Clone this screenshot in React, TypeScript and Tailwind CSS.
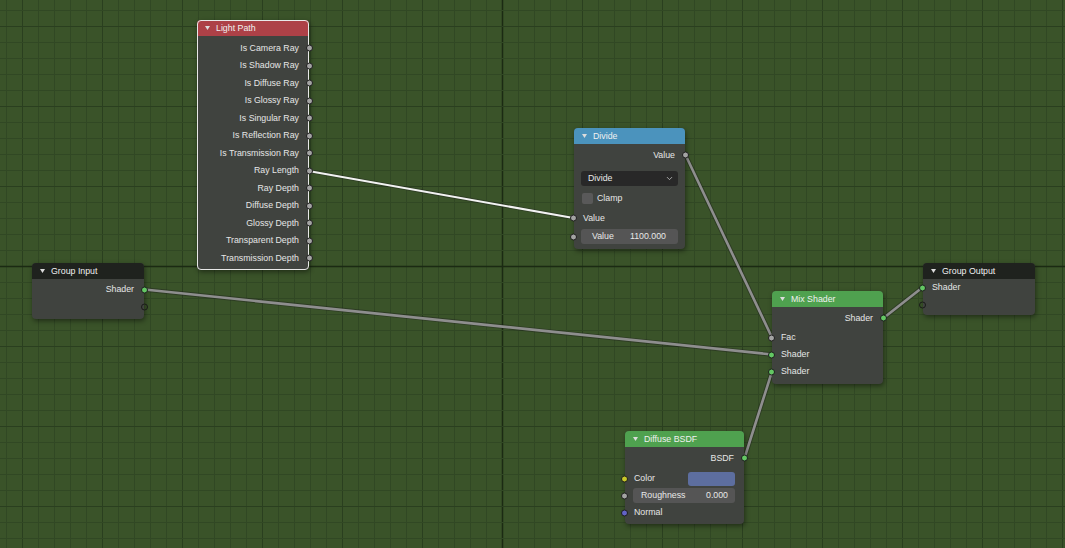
import { ChevronDown } from 'lucide-react';
import type { ReactNode } from 'react';

type SockColor = 'grey' | 'green' | 'yellow' | 'blue' | 'empty';

// socket fill per data type, as in the node editor theme
const SOCKET: Record<SockColor, string> = {
    grey: 'bg-[#a3a3a3] border-[#1d1d1d]',
    green: 'bg-[#63c763] border-[#1d1d1d]',
    yellow: 'bg-[#c7c729] border-[#1d1d1d]',
    blue: 'bg-[#6363c7] border-[#1d1d1d]',
    empty: 'bg-transparent border-[#1a1a1a]',
};

function Socket({ color, side }: { color: SockColor; side: 'in' | 'out' }) {
    return (
        <span
            className={`absolute top-1/2 -translate-y-1/2 w-[7px] h-[7px] rounded-full border ${SOCKET[color]} ${side === 'in' ? 'left-[-4px]' : 'right-[-4px]'}`}
        />
    );
}

function Tri() {
    return (
        <svg width="5" height="4" viewBox="0 0 5 4" className="shrink-0">
            <path d="M0 0 L5 0 L2.5 4 Z" fill="#dcdcdc" />
        </svg>
    );
}

function Header({ title, color }: { title: string; color: string }) {
    return (
        <div className={`flex items-center gap-[6px] h-[16px] pl-[8px] rounded-t-[4px] text-[#f0f0f0] ${color}`}>
            <Tri />
            <span>{title}</span>
        </div>
    );
}

function OutRow({ label, color, h = 'h-[17.5px]' }: { label?: string; color: SockColor; h?: string }) {
    return (
        <div className={`relative flex items-center justify-end pr-[10px] ${h}`}>
            {label}
            <Socket color={color} side="out" />
        </div>
    );
}

function InRow({ label, color, h = 'h-[17px]', children }: { label?: string; color: SockColor; h?: string; children?: ReactNode }) {
    return (
        <div className={`relative flex items-center pl-[9px] ${h}`}>
            <Socket color={color} side="in" />
            {label}
            {children}
        </div>
    );
}

function Node({ pos, header, children, selected }: { pos: string; header: ReactNode; children: ReactNode; selected?: boolean }) {
    return (
        <div
            className={`absolute ${pos} rounded-[4px] bg-[#40433f] text-[#e6e6e6] shadow-[1px_2px_5px_rgba(0,0,0,0.45)] ${selected ? 'outline-1 -outline-offset-1 outline-[#e8e8e8]' : ''}`}
        >
            {header}
            {children}
        </div>
    );
}

function Field({ label, value, cls }: { label: string; value: string; cls: string }) {
    return (
        <div className={`flex items-center justify-between h-[15px] rounded-[3px] bg-[#555555] text-[#e8e8e8] ${cls}`}>
            <span>{label}</span>
            <span>{value}</span>
        </div>
    );
}

const LIGHT_PATH = [
    'Is Camera Ray',
    'Is Shadow Ray',
    'Is Diffuse Ray',
    'Is Glossy Ray',
    'Is Singular Ray',
    'Is Reflection Ray',
    'Is Transmission Ray',
    'Ray Length',
    'Ray Depth',
    'Diffuse Depth',
    'Glossy Depth',
    'Transparent Depth',
    'Transmission Depth',
];

// grid lines every 16px, stronger every 5th, axis through (502, 266)
function Grid() {
    const lines: ReactNode[] = [];
    for (let x = 6; x < 1065; x += 16) {
        const k = Math.round((x - 502) / 16);
        const stroke = k === 0 ? '#1b2a13' : k % 5 === 0 ? '#2a3f1f' : '#314824';
        lines.push(<line key={`v${x}`} x1={x + 0.5} y1={0} x2={x + 0.5} y2={548} stroke={stroke} strokeWidth={k === 0 ? 1.5 : 1} />);
    }
    for (let y = 10; y < 548; y += 16) {
        const k = Math.round((y - 266) / 16);
        const stroke = k === 0 ? '#1b2a13' : k % 5 === 0 ? '#2a3f1f' : '#314824';
        lines.push(<line key={`h${y}`} x1={0} y1={y + 0.5} x2={1065} y2={y + 0.5} stroke={stroke} strokeWidth={k === 0 ? 1.5 : 1} />);
    }
    return <g>{lines}</g>;
}

const WIRES: [number, number, number, number][] = [
    [685.5, 155, 772, 337.5],
    [144.5, 289.5, 772, 354.5],
    [744.5, 458, 772, 371.5],
    [883.5, 318, 923, 287],
];

export default function App() {
    return (
        <div className="relative w-[1065px] h-[548px] overflow-hidden bg-[#3a5329] font-['Liberation_Sans',Arial,sans-serif] text-[8.8px] leading-none">
            <svg className="absolute inset-0" width="1065" height="548">
                <Grid />
                {WIRES.map(([x1, y1, x2, y2], i) => (
                    <g key={i}>
                        <line x1={x1} y1={y1} x2={x2} y2={y2} stroke="#1c1c1c" strokeOpacity="0.4" strokeWidth="4.5" strokeLinecap="round" />
                        <line x1={x1} y1={y1} x2={x2} y2={y2} stroke="#8e8e8e" strokeWidth="2.6" strokeLinecap="round" />
                    </g>
                ))}
                <line x1={308.5} y1={171} x2={573.5} y2={218} stroke="#1c1c1c" strokeOpacity="0.4" strokeWidth="3.8" strokeLinecap="round" />
                <line x1={308.5} y1={171} x2={573.5} y2={218} stroke="#f2f2f2" strokeWidth="2" strokeLinecap="round" />
            </svg>

            {/* Light Path */}
            <Node pos="left-[197px] top-[20px] w-[112px]" selected header={<Header title="Light Path" color="bg-[#ad4147]" />}>
                <div className="pt-[3.5px] pb-[3px]">
                    {LIGHT_PATH.map((l) => (
                        <OutRow key={l} label={l} color="grey" />
                    ))}
                </div>
            </Node>

            {/* Divide */}
            <Node pos="left-[574px] top-[128px] w-[111px]" header={<Header title="Divide" color="bg-[#4b93bd]" />}>
                <div className="pt-[2px] pb-[5px]">
                    <OutRow label="Value" color="grey" h="h-[18px]" />
                    <div className="mt-[7px] mx-[7px] h-[15px] flex items-center justify-between pl-[7px] pr-[4px] rounded-[3px] bg-[#282828] text-[#e8e8e8]">
                        <span>Divide</span>
                        <ChevronDown size={9} strokeWidth={2} className="text-[#cfcfcf]" />
                    </div>
                    <div className="mt-[6px] h-[12px] flex items-center gap-[4px] pl-[8px]">
                        <span className="w-[11px] h-[11px] rounded-[2px] bg-[#595959]" />
                        <span>Clamp</span>
                    </div>
                    <InRow label="Value" color="grey" h="h-[18px] mt-[5px]" />
                    <div className="relative mt-[2px]">
                        <Socket color="grey" side="in" />
                        <Field label="Value" value="1100.000" cls="mx-[7px] pl-[11px] pr-[12px]" />
                    </div>
                </div>
            </Node>

            {/* Group Input */}
            <Node pos="left-[32px] top-[263px] w-[112px]" header={<Header title="Group Input" color="bg-[#1f221e]" />}>
                <div className="pt-[2px] pb-[4px]">
                    <OutRow label="Shader" color="green" h="h-[17px]" />
                    <OutRow color="empty" h="h-[17px]" />
                </div>
            </Node>

            {/* Group Output */}
            <Node pos="left-[923px] top-[263px] w-[112px]" header={<Header title="Group Output" color="bg-[#1f221e]" />}>
                <div className="pb-[2px]">
                    <InRow label="Shader" color="green" />
                    <InRow color="empty" />
                </div>
            </Node>

            {/* Mix Shader */}
            <Node pos="left-[772px] top-[291px] w-[111px]" header={<Header title="Mix Shader" color="bg-[#4fa14f]" />}>
                <div className="pt-[2px] pb-[4px]">
                    <OutRow label="Shader" color="green" h="h-[18px]" />
                    <InRow label="Fac" color="grey" h="h-[17px] mt-[2px]" />
                    <InRow label="Shader" color="green" />
                    <InRow label="Shader" color="green" />
                </div>
            </Node>

            {/* Diffuse BSDF */}
            <Node pos="left-[625px] top-[431px] w-[119px]" header={<Header title="Diffuse BSDF" color="bg-[#4fa14f]" />}>
                <div className="pt-[2px] pb-[3px]">
                    <OutRow label="BSDF" color="green" h="h-[18px]" />
                    <InRow label="Color" color="yellow" h="h-[17px] mt-[3px] justify-between pr-[9px]">
                        <span className="w-[47px] h-[14px] rounded-[3px] bg-[#5d6e9f]" />
                    </InRow>
                    <div className="relative h-[17px] flex items-center">
                        <Socket color="grey" side="in" />
                        <Field label="Roughness" value="0.000" cls="flex-1 ml-[8px] mr-[9px] h-[14px] pl-[8px] pr-[7px]" />
                    </div>
                    <InRow label="Normal" color="blue" />
                </div>
            </Node>
        </div>
    );
}
